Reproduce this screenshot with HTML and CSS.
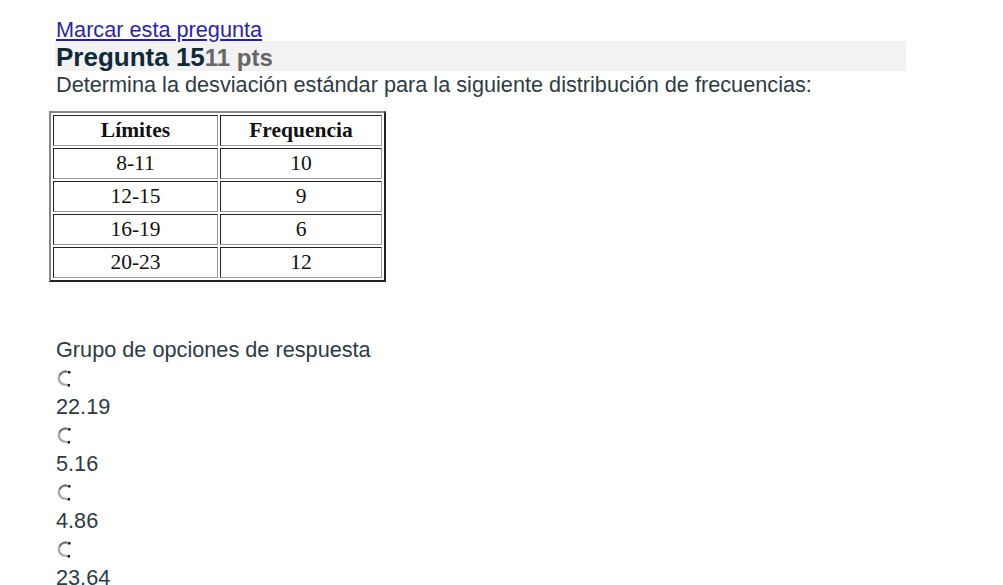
FILE: index.html
```html
<!DOCTYPE html>
<html lang="es">
<head>
<meta charset="utf-8">
<link rel="stylesheet" href="styles.css">
</head>
<body>
<div class="question">
  <a class="flag" href="#">Marcar esta pregunta</a>
  <h2 class="qheader"><span class="qnum">Pregunta 15</span><span class="pts">11 pts</span></h2>
  <p class="prompt">Determina la desviación estándar para la siguiente distribución de frecuencias:</p>
  <table class="freq">
    <tr><th>Límites</th><th>Frequencia</th></tr>
    <tr><td>8-11</td><td>10</td></tr>
    <tr><td>12-15</td><td>9</td></tr>
    <tr><td>16-19</td><td>6</td></tr>
    <tr><td>20-23</td><td>12</td></tr>
  </table>
  <div class="answers">
    <div class="group-label">Grupo de opciones de respuesta</div>
    <div class="radio"><svg width="18" height="18" viewBox="0 0 18 18"><path d="M12.5 3.5 A6.5 6.5 0 1 0 11 15.5" fill="none" stroke="#a8a8a8" stroke-width="2.2"/><path d="M3.5 6.5 A6.5 6.5 0 0 1 11 2.7" fill="none" stroke="#6a6a6a" stroke-width="1.8"/><rect x="12" y="2" width="2.5" height="2.5" fill="#222"/><rect x="11.5" y="15" width="2.5" height="2.5" fill="#111"/></svg></div>
    <div class="answer">22.19</div>
    <div class="radio"><svg width="18" height="18" viewBox="0 0 18 18"><path d="M12.5 3.5 A6.5 6.5 0 1 0 11 15.5" fill="none" stroke="#a8a8a8" stroke-width="2.2"/><path d="M3.5 6.5 A6.5 6.5 0 0 1 11 2.7" fill="none" stroke="#6a6a6a" stroke-width="1.8"/><rect x="12" y="2" width="2.5" height="2.5" fill="#222"/><rect x="11.5" y="15" width="2.5" height="2.5" fill="#111"/></svg></div>
    <div class="answer">5.16</div>
    <div class="radio"><svg width="18" height="18" viewBox="0 0 18 18"><path d="M12.5 3.5 A6.5 6.5 0 1 0 11 15.5" fill="none" stroke="#a8a8a8" stroke-width="2.2"/><path d="M3.5 6.5 A6.5 6.5 0 0 1 11 2.7" fill="none" stroke="#6a6a6a" stroke-width="1.8"/><rect x="12" y="2" width="2.5" height="2.5" fill="#222"/><rect x="11.5" y="15" width="2.5" height="2.5" fill="#111"/></svg></div>
    <div class="answer">4.86</div>
    <div class="radio"><svg width="18" height="18" viewBox="0 0 18 18"><path d="M12.5 3.5 A6.5 6.5 0 1 0 11 15.5" fill="none" stroke="#a8a8a8" stroke-width="2.2"/><path d="M3.5 6.5 A6.5 6.5 0 0 1 11 2.7" fill="none" stroke="#6a6a6a" stroke-width="1.8"/><rect x="12" y="2" width="2.5" height="2.5" fill="#222"/><rect x="11.5" y="15" width="2.5" height="2.5" fill="#111"/></svg></div>
    <div class="answer">23.64</div>
  </div>
</div>
</body>
</html>
```
FILE: styles.css
```css
html, body {
  margin: 0;
  padding: 0;
  background: #fff;
}
body {
  font-family: "Liberation Sans", Arial, sans-serif;
  color: #2d3b45;
  font-size: 21.7px;
  line-height: 23px;
}
.question {
  padding: 18px 0 0 55px;
  width: 851px;
}
.flag {
  display: block;
  color: #2a1fb5;
  text-decoration: underline;
  padding-left: 1px;
}
.qheader {
  margin: 0;
  background: #f2f2f2;
  height: 30px;
  line-height: 33px;
  font-size: 26px;
  font-weight: bold;
  padding-left: 1px;
}
.qnum {
  color: #0e2a3a;
}
.pts {
  color: #666;
  font-size: 24px;
}
.prompt {
  margin: 0;
  padding-left: 1px;
  line-height: 28px;
}
.freq {
  margin: 12px 0 0 -6px;
  border: 2px solid;
  border-color: #888 #222 #222 #888;
  border-spacing: 2px;
  font-family: "Liberation Serif", "Times New Roman", serif;
  font-size: 21.5px;
  color: #111;
}
.freq th, .freq td {
  border: 1px solid;
  border-color: #222 #999 #999 #222;
  text-align: center;
  height: 29px;
  padding: 0;
}
.freq th:first-child, .freq td:first-child { width: 163px; }
.freq th:last-child, .freq td:last-child { width: 160px; }
.answers {
  margin-top: 53px;
  padding-left: 1px;
}
.group-label {
  line-height: 29px;
}
.radio {
  height: 28px;
  display: flex;
  align-items: center;
}
.answer {
  height: 29px;
  line-height: 29px;
}
```
